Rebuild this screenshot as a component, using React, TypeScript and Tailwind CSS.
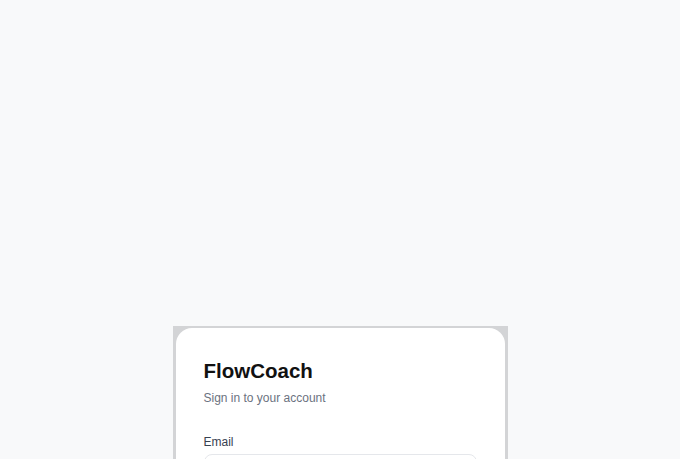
import { useState } from "react";

export default function App() {
  const [email, setEmail] = useState("");
  const [password, setPassword] = useState("");

  return (
    <div
      className="min-h-screen bg-[#f8f9fa] flex justify-center pt-[326px]"
      style={{ fontFamily: '"Liberation Sans", Arial, sans-serif' }}
    >
      <div className="w-[335px] bg-[#d3d4d6] px-[3px] pt-[2px]">
        <div className="bg-white rounded-2xl px-7 pt-[29px] pb-7">
          <h1 className="text-[20.5px] leading-[28px] font-bold text-[#111111]">FlowCoach</h1>
          <p className="mt-[5px] text-[12px] leading-4 text-[#6b7280]">Sign in to your account</p>

          <form className="mt-[28px] flex flex-col gap-4" onSubmit={(e) => e.preventDefault()}>
            <label className="flex flex-col">
              <span className="text-[12px] leading-4 text-[#374151]">Email</span>
              <input
                type="email"
                value={email}
                onChange={(e) => setEmail(e.target.value)}
                className="mt-1 h-9 rounded-lg border border-[#e5e7eb] px-3 text-[12px] outline-none focus:border-[#9ca3af]"
              />
            </label>
            <label className="flex flex-col">
              <span className="text-[12px] leading-4 text-[#374151]">Password</span>
              <input
                type="password"
                value={password}
                onChange={(e) => setPassword(e.target.value)}
                className="mt-1 h-9 rounded-lg border border-[#e5e7eb] px-3 text-[12px] outline-none focus:border-[#9ca3af]"
              />
            </label>
            <button
              type="submit"
              className="mt-2 h-9 rounded-lg bg-[#111827] text-white text-[12px] font-medium"
            >
              Sign in
            </button>
          </form>
        </div>
      </div>
    </div>
  );
}
